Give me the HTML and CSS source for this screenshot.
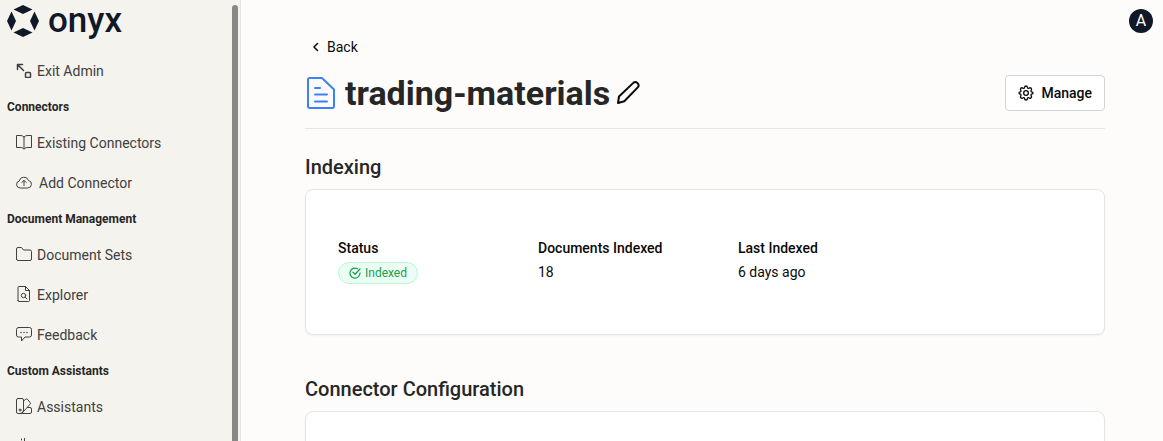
FILE: index.html
```html
<!DOCTYPE html>
<html lang="en">
<head>
    <meta charset="UTF-8">
    <meta name="viewport" content="width=device-width, initial-scale=1.0">
    <title>trading-materials</title>
    <link rel="stylesheet" href="styles.css">
</head>
<body>
    <aside class="sidebar">
        <div class="sidebar-content">
            <a class="logo" href="#">
                <svg class="logo-mark" viewBox="0 0 32 32" fill="currentColor">
                    <path d="M16 0 25.500 4.500 16 9 6.500 4.500z"/>
                    <path d="M16 23 25.500 27.500 16 32 6.500 27.500z"/>
                    <path d="M4.500 6.500 9 16 4.500 25.500 0 16z"/>
                    <path d="M27.500 6.500 32 16 27.500 25.500 23 16z"/>
                </svg>
                <span class="logo-name">onyx</span>
            </a>
            <nav class="nav">
                <a class="nav-item" href="#">
                    <svg class="nav-icon" viewBox="0 0 16 16">
                        <path class="thick" d="M6.500 2.500h-5v5M1.500 2.500l6 6M10.500 10.500h3a1 1 0 0 1 1 1v3a1 1 0 0 1-1 1h-3a1 1 0 0 1-1-1v-3a1 1 0 0 1 1-1z"/>
                    </svg>
                    Exit Admin
                </a>
                <h2 class="nav-title">Connectors</h2>
                <a class="nav-item" href="#">
                    <svg class="nav-icon" viewBox="0 0 16 16">
                        <path d="M8 3C7 1.800 5.500 1.500 4 1.500H.500v12H4c1.500 0 3 .300 4 1.500 1-1.200 2.500-1.500 4-1.500h3.500v-12H12c-1.500 0-3 .300-4 1.500zM8 3v12"/>
                    </svg>
                    Existing Connectors
                </a>
                <a class="nav-item" href="#">
                    <svg class="nav-icon" viewBox="0 0 16 16">
                        <path d="M4 14a3.500 3.500 0 0 1-.800-6.900 4.800 4.800 0 0 1 9.300-.600A3.800 3.800 0 0 1 12 14zM8 11.500V6.500M5.800 8.500 8 6.300 10.200 8.500"/>
                    </svg>
                    <span class="nav-label">Add Connector</span>
                </a>
                <h2 class="nav-title">Document Management</h2>
                <a class="nav-item" href="#">
                    <svg class="nav-icon" viewBox="0 0 16 16">
                        <path d="M.500 13V3A1.500 1.500 0 0 1 2 1.500h3.500L7.500 4H14a1.500 1.500 0 0 1 1.500 1.500V13a1.500 1.500 0 0 1-1.500 1.500H2A1.500 1.500 0 0 1 .500 13z"/>
                    </svg>
                    Document Sets
                </a>
                <a class="nav-item" href="#">
                    <svg class="nav-icon" viewBox="0 0 16 16">
                        <path d="M2 14.500V1.500a1 1 0 0 1 1-1h6.500l4 4v10a1 1 0 0 1-1 1H3a1 1 0 0 1-1-1zM9.500.500V4.500h4M9.300 11.300l1.600 1.600"/>
                        <circle cx="7.500" cy="9.500" r="2.200"/>
                    </svg>
                    Explorer
                </a>
                <a class="nav-item" href="#">
                    <svg class="nav-icon" viewBox="0 0 16 16">
                        <path d="M2.500 1.500h11a2 2 0 0 1 2 2v5.500a2 2 0 0 1-2 2H9L5.500 15v-4h-3a2 2 0 0 1-2-2V3.500a2 2 0 0 1 2-2z"/>
                        <path class="thick" d="M5 6.500h.010M8 6.500h.010M11 6.500h.010"/>
                    </svg>
                    Feedback
                </a>
                <h2 class="nav-title">Custom Assistants</h2>
                <a class="nav-item" href="#">
                    <svg class="nav-icon" viewBox="0 0 16 16">
                        <path d="M2 .500h4A1.500 1.500 0 0 1 7.500 2v10a3.500 3.500 0 0 1-3.500 3.500H2A1.500 1.500 0 0 1 .500 14V2A1.500 1.500 0 0 1 2 .500zM7.500 3 9.700 1.300a1.500 1.500 0 0 1 2.100.300L14 4.500a1.500 1.500 0 0 1-.300 2.100L6.500 14.600M11.500 9.500H14a1.500 1.500 0 0 1 1.500 1.500v3a1.500 1.500 0 0 1-1.500 1.500H4"/>
                        <circle cx="4" cy="12" r="1"/>
                    </svg>
                    Assistants
                </a>
                <a class="nav-item" href="#" aria-label="Actions">
                    <svg class="nav-icon" viewBox="0 0 16 16">
                        <path d="M5.500 1v1M8.500.500v4M3 6h10v4a5 5 0 0 1-10 0z"/>
                    </svg>
                </a>
            </nav>
        </div>
        <div class="scroll-thumb"></div>
    </aside>

    <main class="main">
        <button class="avatar">A</button>
        <div class="page">
            <button class="back">
                <svg class="back-icon" viewBox="0 0 16 16"><path d="M9.500 4.500 6 8l3.500 3.500"/></svg>
                Back
            </button>
            <header class="page-header">
                <svg class="file-icon" viewBox="0 0 32 32">
                    <path d="M4.500 1H17L29 12.500V29.500a1.500 1.500 0 0 1-1.500 1.500h-23A1.500 1.500 0 0 1 3 29.500V2.500A1.500 1.500 0 0 1 4.500 1zM10 11h5M10 17.500h12M10 24.500h12"/>
                </svg>
                <h1 class="title">trading-materials</h1>
                <button class="edit" aria-label="Edit name">
                    <svg class="edit-icon" viewBox="0 0 24 24">
                        <path d="M2 22l1-6.500L17.300 1.900a2.700 2.700 0 0 1 3.900 0l.600.600a2.700 2.700 0 0 1 0 3.900L8.300 20.200z"/>
                    </svg>
                </button>
                <button class="manage">
                    <svg class="manage-icon" viewBox="0 0 24 24">
                        <circle cx="12" cy="12" r="3.500"/>
                        <path d="M12 1.500c1.500 0 2 .700 2.300 2.500.200.900 1.300 1.300 2 .800 1.500-1 2.400-1 3.400 0s1 1.900 0 3.400c-.500.700-.100 1.800.800 2 1.800.300 2 .800 2 1.800s-.200 1.500-2 1.800c-.900.200-1.300 1.300-.800 2 1 1.500 1 2.400 0 3.400s-1.900 1-3.400 0c-.700-.500-1.800-.100-2 .800-.300 1.800-.800 2.500-2.300 2.500s-2-.700-2.300-2.500c-.200-.900-1.300-1.300-2-.800-1.500 1-2.400 1-3.400 0s-1-1.900 0-3.400c.500-.700.100-1.800-.800-2-1.800-.300-2-.800-2-1.800s.200-1.500 2-1.800c.900-.200 1.300-1.300.800-2-1-1.500-1-2.400 0-3.400s1.900-1 3.400 0c.700.500 1.800.100 2-.800.300-1.800.800-2.500 2.300-2.500z"/>
                    </svg>
                    Manage
                </button>
            </header>

            <h2 class="section-title">Indexing</h2>
            <section class="card">
                <dl class="stats">
                    <div class="stat">
                        <dt>Status</dt>
                        <dd>
                            <span class="badge">
                                <svg class="badge-icon" viewBox="0 0 24 24">
                                    <path d="M17 3.500A10 10 0 1 0 22 12M8 10.500l4 4L22 4"/>
                                </svg>
                                Indexed
                            </span>
                        </dd>
                    </div>
                    <div class="stat">
                        <dt>Documents Indexed</dt>
                        <dd>18</dd>
                    </div>
                    <div class="stat">
                        <dt>Last Indexed</dt>
                        <dd>6 days ago</dd>
                    </div>
                </dl>
            </section>

            <h2 class="section-title">Connector Configuration</h2>
            <section class="card"></section>
        </div>
    </main>
</body>
</html>
```
FILE: styles.css
```css
* {
    box-sizing: border-box;
}
body {
    margin: 0;
    display: flex;
    height: 100vh;
    overflow: hidden;
    background-color: #fdfcfa;
    color: #0a0a0a;
    font-family: Roboto, "Liberation Sans", sans-serif;
    font-size: 14px;
    line-height: 20px;
}
h1, h2, dl, dd {
    margin: 0;
}
button {
    font: inherit;
    color: inherit;
    background: none;
    border: none;
    padding: 0;
    cursor: pointer;
}
a {
    color: inherit;
    text-decoration: none;
}
svg {
    flex-shrink: 0;
}
svg:not(.logo-mark) {
    fill: none;
    stroke: currentColor;
    stroke-linecap: round;
    stroke-linejoin: round;
}
.sidebar {
    flex: 0 0 241px;
    display: flex;
    background-color: #f4f3ee;
    border-right: 1px solid #e5e5e5;
}
.sidebar-content {
    flex: 1;
    padding: 5px 0 0 7px;
    overflow: hidden;
}
.scroll-thumb {
    width: 6px;
    margin: 5px 2px 0 0;
    border-radius: 3px 3px 0 0;
    background-color: #888;
}
.logo {
    display: flex;
    align-items: center;
    gap: 9px;
    height: 32px;
    color: #111827;
}
.logo-mark {
    width: 32px;
    height: 32px;
}
.logo-name {
    font-size: 35px;
    font-weight: 500;
}
.nav {
    padding-top: 14px;
}
.nav-item {
    display: flex;
    align-items: center;
    gap: 5px;
    height: 40px;
    padding-left: 9px;
    color: #404040;
}
.nav-label {
    padding-left: 2px;
}
.nav-icon {
    width: 16px;
    height: 16px;
    margin-bottom: 2px;
    stroke-width: 1;
}
.nav-icon .thick {
    stroke-width: 1.5;
}
.nav-title {
    height: 32px;
    padding-top: 8px;
    font-size: 12px;
    line-height: 16px;
    font-weight: 700;
    color: #262626;
}
.main {
    flex: 1;
    position: relative;
    padding: 35px 58px 0 64px;
}
.avatar {
    position: absolute;
    top: 9px;
    right: 10px;
    width: 24px;
    height: 24px;
    border-radius: 50%;
    background-color: #111827;
    color: #fff;
    font-size: 16px;
}
.page {
    width: 100%;
}
.back {
    display: flex;
    align-items: center;
    gap: 3px;
    padding-left: 3px;
    height: 24px;
}
.back-icon {
    width: 16px;
    height: 16px;
    stroke-width: 1.5;
}
.page-header {
    display: flex;
    align-items: center;
    height: 70px;
    margin-bottom: 24px;
    padding-bottom: 2px;
    border-bottom: 1px solid #e5e5e5;
}
.file-icon {
    width: 32px;
    height: 32px;
    color: #3b82f6;
    stroke-width: 2;
}
.title {
    margin-left: 8px;
    font-size: 34px;
    line-height: 40px;
    font-weight: 700;
    color: #262626;
}
.edit {
    display: flex;
    margin-left: 6px;
}
.edit-icon {
    width: 24px;
    height: 24px;
    stroke-width: 2;
}
.manage {
    display: flex;
    align-items: center;
    gap: 7px;
    height: 36px;
    margin-left: auto;
    padding: 0 12px;
    border: 1px solid #d4d4d4;
    border-radius: 4px;
    background-color: #fff;
    font-weight: 500;
}
.manage-icon {
    width: 16px;
    height: 16px;
    stroke-width: 2;
}
.section-title {
    margin-bottom: 8px;
    font-size: 20px;
    line-height: 28px;
    font-weight: 500;
    color: #262626;
}
.card {
    min-height: 146px;
    margin-bottom: 40px;
    padding: 48px 32px;
    border: 1px solid #e5e5e5;
    border-radius: 8px;
    background-color: #fff;
    box-shadow: 0 1px 2px rgba(0, 0, 0, 0.05);
}
.stats {
    display: flex;
}
.stat {
    width: 200px;
}
.stat dt {
    margin-bottom: 4px;
    font-weight: 500;
}
.badge {
    display: inline-flex;
    align-items: center;
    gap: 4px;
    height: 22px;
    padding: 0 10px;
    border: 1px solid #bbf7d0;
    border-radius: 11px;
    background-color: #ecfdf5;
    color: #16a34a;
    font-size: 12px;
}
.badge-icon {
    width: 12px;
    height: 12px;
    stroke-width: 2.5;
}
```
